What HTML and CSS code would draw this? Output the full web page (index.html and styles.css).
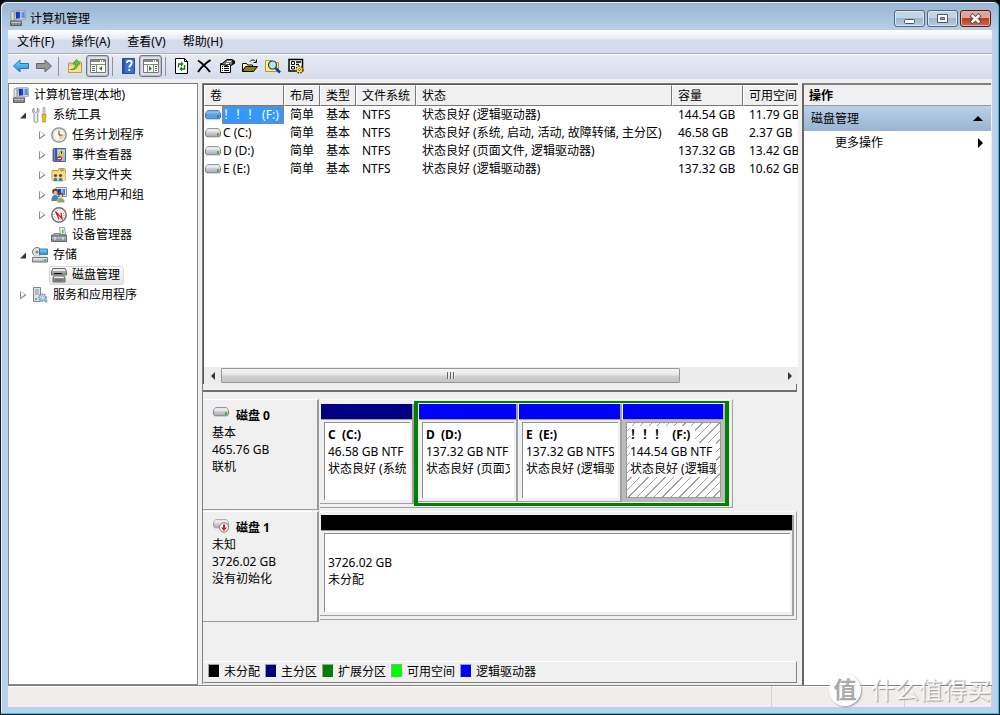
FILE: index.html
```html
<!DOCTYPE html>
<html lang="zh-CN">
<head>
<meta charset="utf-8">
<title>计算机管理</title>
<link rel="stylesheet" href="styles.css">
</head>
<body>
<svg class="sprite" aria-hidden="true">
  <linearGradient id="metal" x1="0" y1="0" x2="0" y2="1"><stop offset="0" stop-color="#f4f4f6"/><stop offset="1" stop-color="#a6a8ae"/></linearGradient>
  <linearGradient id="screen" x1="0" y1="0" x2="1" y2="0"><stop offset="0" stop-color="#0a2fc4"/><stop offset=".45" stop-color="#1747d6"/><stop offset=".5" stop-color="#b5ceff"/><stop offset="1" stop-color="#2f62e8"/></linearGradient>
  <linearGradient id="sky" x1="0" y1="0" x2="0" y2="1"><stop offset="0" stop-color="#7fd4ff"/><stop offset="1" stop-color="#1c8fdc"/></linearGradient>
  <symbol id="computer" viewBox="0 0 16 16"><path d="M1 2l3-1v10l-3-1z" fill="#e4e4da" stroke="#8c8c84" stroke-width=".8"/><path d="M4 .8h11l.6 8.400L5 9.800z" fill="#ecece6" stroke="#8a8a8a" stroke-width=".8"/><path d="M5.500 1.800h8.800l.4 6.300-8.700.6z" fill="url(#screen)"/><path d="M7 9.500h5l1 2H6z" fill="#c8c8c0"/><path d="M.5 11h11v4.500H.5z" fill="#6f7474" stroke="#4c5050" stroke-width=".8"/><path d="M1 12.300h10" stroke="#d2d6d6"/><path d="M2 14h2M5 14h2M8 14h2" stroke="#b8bcbc"/></symbol>
  <symbol id="tools" viewBox="0 0 16 16"><path d="M2 1v3.500l1.700 1 1.700-1V1C7.500 2 7.500 5 5.700 6.500v8c0 1.300-3.700 1.300-3.700 0v-8C0 5 0 2 2 1z" fill="#ececec" stroke="#777" stroke-width=".8"/><path d="M11 .5h2V7h-2z" fill="#ddd" stroke="#888" stroke-width=".6"/><path d="M10 7.500h4v2.500l-.7 1v4h-2.600v-4l-.7-1z" fill="#f5bd1f" stroke="#b77d0a" stroke-width=".7"/></symbol>
  <symbol id="clock" viewBox="0 0 16 16"><circle cx="8" cy="8" r="7.200" fill="#f5f0dc" stroke="#85888d" stroke-width="1.300"/><circle cx="8" cy="8" r="5.500" fill="#fdfbf2" stroke="#d9d4c4" stroke-width=".8"/><path d="M8 8h5A5 5 0 0 1 8 13z" fill="#f3d38b"/><path d="M8 3.500V8h3.500" fill="none" stroke="#444"/></symbol>
  <symbol id="events" viewBox="0 0 16 16"><path d="M2.500 1.500h12v13h-12z" fill="#9bbbe4" stroke="#3f68a9"/><path d="M4 2h2v12H4z" fill="#345da3"/><path d="M1 3h3M1 5h3M1 7h3M1 9h3M1 11h3M1 13h3" stroke="#555" stroke-width=".8"/><path d="M7 4h7M7 6h7M7 8h7" stroke="#e8f1fc"/><path d="M10.500 2.500l3 5.500h-6z" fill="#ffd629" stroke="#b88b00" stroke-width=".5"/><path d="M10.500 4.300v2.500" stroke="#222"/><circle cx="8.500" cy="11.500" r="2.500" fill="#dd2a24"/><path d="M7 11.500h3" stroke="#fff"/></symbol>
  <symbol id="share" viewBox="0 0 16 16"><path d="M1 3.500h6l1-2h5.500l1 1.500v10H1z" fill="#f7d46f" stroke="#c99b30"/><path d="M9 2.500h4v1.500H9z" fill="#4da3da"/><path d="M1.500 5.500h13v7.500h-13z" fill="#f9df8c"/><circle cx="4.500" cy="8.500" r="1.600" fill="#6b4424"/><circle cx="9.500" cy="8.500" r="1.600" fill="#6b4424"/><path d="M2 14.500c0-5.500 5-5.500 5 0zM7 14.500c0-5.500 5-5.500 5 0z" fill="#3e7f9c" stroke="#fff" stroke-width=".5"/></symbol>
  <symbol id="users" viewBox="0 0 16 16"><path d="M5 .5h10.500v9H5z" fill="#e4e6ed" stroke="#8890a0"/><path d="M6.500 2h7.500v6H6.500z" fill="url(#screen)"/><circle cx="4" cy="4.500" r="2.800" fill="#6b3d1c"/><circle cx="4.400" cy="5.500" r="1.700" fill="#f0bf91"/><path d="M.3 14c0-8 7.700-8 7.700 0z" fill="#4b83bb"/><circle cx="9.800" cy="8" r="2.500" fill="#7f4b1c"/><circle cx="9.800" cy="9" r="1.600" fill="#f2c59c"/><path d="M5.800 15.700c0-6.500 8-6.500 8 0z" fill="#7cae69" stroke="#eee" stroke-width=".5"/></symbol>
  <symbol id="gauge" viewBox="0 0 16 16"><circle cx="8" cy="8" r="7.200" fill="#fff" stroke="#6f6f6f" stroke-width="1.500"/><circle cx="8" cy="8" r="5" fill="none" stroke="#666" stroke-width=".8" stroke-dasharray="1 1.600"/><path d="M4.500 4.500l6.500 7-1-6M4.500 4.500L8 12" fill="none" stroke="#d21c1c" stroke-width="1.300"/></symbol>
  <symbol id="device" viewBox="0 0 16 16"><path d="M8.500.5h5l1 7h-5z" fill="#f0f3f3" stroke="#98a0a2"/><path d="M11 2.500h1.500v4H11z" fill="#4cb752"/><path d="M3 8V6.500h6V8" fill="none" stroke="#7c8487"/><path d="M.5 8h15v6.500H.5z" fill="#8d9598" stroke="#5f686b"/><path d="M1 11h14" stroke="#c9d0d2"/><path d="M4 10v3M12 10v3" stroke="#eef2f3"/></symbol>
  <symbol id="storage" viewBox="0 0 16 16"><circle cx="5" cy="5" r="4.500" fill="#dfe1e4" stroke="#777"/><circle cx="5" cy="5" r="1.500" fill="#888"/><path d="M7.500 2h8v5.500h-8z" fill="url(#sky)" stroke="#447d9c"/><path d="M2 8.500h12l1.500 2H.5z" fill="#e3e4e6"/><path d="M.5 10.500h15V15H.5z" fill="url(#metal)" stroke="#777"/><path d="M12 12h2v2h-2z" fill="#42d22a"/></symbol>
  <symbol id="disks" viewBox="0 0 16 16"><path d="M2 1.500h12l1.500 3V8H.5V4.500z" fill="#a2a4a7" stroke="#606264"/><path d="M2.300 2h11.400l1 2H1.300z" fill="#e8eaec"/><path d="M3 6.500h8" stroke="#111"/><path d="M12.500 5.500h1.700v1.700h-1.700z" fill="#3fca3f"/><path d="M3 9h10l1 2v4H2v-4z" fill="#909396" stroke="#666"/><path d="M3.500 9.500h9l.7 1.500H2.800z" fill="#e8e9eb"/><path d="M4 13h8" stroke="#555"/></symbol>
  <symbol id="services" viewBox="0 0 16 16"><path d="M1.500.5h7v14h-7z" fill="#dfe3e5" stroke="#7b858c"/><path d="M3 3h4M3 5h4M3 7h4" stroke="#829099"/><path d="M3 11h2v2H3z" fill="#5bc24f"/><circle cx="10.500" cy="10.500" r="3.500" fill="#b8d2e8" stroke="#6d93b5" stroke-width="1.600" stroke-dasharray="1.500 1"/><circle cx="10.500" cy="10.500" r="1.300" fill="#fff" stroke="#6d93b5" stroke-width=".5"/><circle cx="14" cy="14" r="1.700" fill="#8fb1cd"/></symbol>
  <symbol id="drive" viewBox="0 0 16 10"><path d="M2.500.7h11l2 2.800v3.800l-1.200 1.500H1.700L.5 7.300V3.500z" fill="url(#metal)" stroke="#808087"/><path d="M2.500 1.200h11l1.500 2.300H1z" fill="#ececf0"/><path d="M12 5h1.800v3H12z" fill="#3fb52c"/></symbol>
  <symbol id="drive-blue" viewBox="0 0 16 10"><path d="M2.500.7h11l2 2.800v3.800l-1.200 1.500H1.700L.5 7.300V3.500z" fill="#5b9fe6" stroke="#3a72b8"/><path d="M2.500 1.200h11l1.500 2.300H1z" fill="#8bbdf0"/><path d="M12 5h1.800v3H12z" fill="#207f92"/></symbol>
  <symbol id="drive-down" viewBox="0 0 16 14"><path d="M2.500.7h11l2 2.800v3.800l-1.200 1.500H1.700L.5 7.300V3.500z" fill="url(#metal)" stroke="#a0a0a6"/><path d="M2.500 1.200h11l1.500 2.300H1z" fill="#ececf0"/><circle cx="11" cy="8.500" r="4.600" fill="#fff" stroke="#777"/><path d="M10 5.500h2v3h2l-3 3.500-3-3.500h2z" fill="#d51717"/></symbol>
</svg>

<div class="window">
  <header class="titlebar">
    <svg class="icon"><use href="#computer"/></svg>
    <h1 class="title">计算机管理</h1>
    <div class="window-buttons">
      <button class="winbtn" aria-label="最小化"><svg viewBox="0 0 29 15"><rect x="9.500" y="8.500" width="10" height="4" rx="1" fill="#fff" stroke="#4c5566"/></svg></button>
      <button class="winbtn" aria-label="最大化"><svg viewBox="0 0 29 15"><path d="M9.500 3.500h10v8h-10z" fill="#fff" stroke="#4c5566"/><path d="M12.500 6.500h4v2h-4z" fill="#9db5d0" stroke="#4c5566"/></svg></button>
      <button class="winbtn close" aria-label="关闭"><svg viewBox="0 0 29 15"><path d="M11.500 5l6 5.500M17.500 5l-6 5.500" stroke="#50525e" stroke-width="4.400" stroke-linecap="square"/><path d="M11.500 5l6 5.500M17.500 5l-6 5.500" stroke="#fff" stroke-width="2.400" stroke-linecap="square"/></svg></button>
    </div>
  </header>

  <div class="client">
    <nav class="menubar">
      <button>文件(F)</button><button>操作(A)</button><button>查看(V)</button><button>帮助(H)</button>
    </nav>
    <div class="toolbar" role="toolbar">
      <button aria-label="后退"><svg class="icon" viewBox="0 0 16 16"><path d="M.5 8l6.500-6v3.500h8.500v5H7V14z" fill="url(#sky)" stroke="#2477ad"/></svg></button>
      <button aria-label="前进"><svg class="icon" viewBox="0 0 16 16"><path d="M15.500 8L9 2v3.500H.5v5H9V14z" fill="#969696" stroke="#666"/></svg></button>
      <span class="sep"></span>
      <button aria-label="上一级"><svg class="icon" viewBox="0 0 16 16"><path d="M1.500 5h5l1-1.500h6l1 1.500v9.500h-13z" fill="#efcb76" stroke="#c39a4a"/><path d="M2 8h12v6H2z" fill="#f8dd94"/><path d="M3.500 11.500c4 0 5-3 5-5.500H6L9.500 1.500 13 6h-2c0 4-3 6-7.500 5.500z" fill="#57cf35" stroke="#2a8e1c" stroke-width=".7"/></svg></button>
      <button class="pressed" aria-label="显示控制台树"><svg class="icon" viewBox="0 0 16 16"><path d="M.5 1.500h15v13H.5z" fill="#fff" stroke="#777"/><path d="M1 3h14" stroke="#888" stroke-width="2" stroke-dasharray="9 1 1 1"/><path d="M1 6.500h14M6.500 7v7" stroke="#888"/><path d="M2 8.500h3M2 10.500h3M2 12.500h3" stroke="#666"/><path d="M12 8v5l-3-2.500z" fill="#149414"/></svg></button>
      <span class="sep"></span>
      <button aria-label="帮助"><svg class="icon" viewBox="0 0 16 16"><path d="M2.500.5h12v15h-12z" fill="#3f6ecb" stroke="#274a94"/><path d="M3 1h2v14H3z" fill="#2c53a6"/><path d="M6.800 5c0-3 5-3 5 0 0 2-2.500 2-2.500 4.500M9.300 11v2" fill="none" stroke="#fff" stroke-width="1.800"/></svg></button>
      <button class="pressed" aria-label="显示操作窗格"><svg class="icon" viewBox="0 0 16 16"><path d="M.5 1.500h15v13H.5z" fill="#fff" stroke="#777"/><path d="M1 3h14" stroke="#888" stroke-width="2" stroke-dasharray="9 1 1 1"/><path d="M1 6.500h14M10.500 7v7M4.500 7v7" stroke="#888"/><path d="M12 8.500h2M12 10.500h2M12 12.500h2" stroke="#666"/><path d="M6 8v5l3-2.500z" fill="#149414"/></svg></button>
      <span class="sep"></span>
      <button aria-label="刷新"><svg class="icon" viewBox="0 0 16 16"><path d="M2.500.5h9l3 3v12h-12z" fill="#fff" stroke="#000"/><path d="M11.500.5v3h3" fill="none" stroke="#000"/><path d="M5.500 9.500V6H9M11.500 7v4H8" fill="none" stroke="#087d08" stroke-width="1.300"/><path d="M8 3.500v5L10.500 6zM9 8.500v5L6.500 11z" fill="#087d08"/></svg></button>
      <button aria-label="删除"><svg class="icon" viewBox="0 0 16 16"><path d="M2 2.500c4 2.500 8 6.500 12 11.500M14.500 2C9 5.500 5 9.500 2 14" fill="none" stroke="#000" stroke-width="2"/></svg></button>
      <button aria-label="属性"><svg class="icon" viewBox="0 0 16 16"><path d="M1.500 5.500h10v9h-10z" fill="#fff" stroke="#000"/><path d="M3 8.500h1M5 8.500h5M3 10.500h1M5 10.500h5M3 12.500h1M5 12.500h5" stroke="#000"/><path d="M2 6.500l6-5h5l2.500 1.500v2.500L12 7.500 10 6 8 7.500z" fill="#777" stroke="#000"/><path d="M8 3.500h4M7 5.500h3" stroke="#fff"/><path d="M14 2v4" stroke="#000" stroke-width="1.500"/></svg></button>
      <button aria-label="打开"><svg class="icon" viewBox="0 0 16 16"><path d="M.5 13.500v-8h4l1 1.500h5v2" fill="#ffff9c" stroke="#000"/><path d="M.5 13.500l3-5h12l-4 5z" fill="#8a8600" stroke="#000"/><path d="M8 3.500c1.500-2 4-2 5.500 0M14.500 1.500v3h-3" fill="none" stroke="#000"/></svg></button>
      <button aria-label="查找"><svg class="icon" viewBox="0 0 16 16"><path d="M.5 2.500h6l1 2h6v9H.5z" fill="#fff38c" stroke="#b99a20"/><circle cx="7.500" cy="7" r="4" fill="#aeeaf5" stroke="#333" stroke-width="1.200"/><path d="M10.500 10l4.500 4.500" stroke="#1230b8" stroke-width="2.500"/></svg></button>
      <button aria-label="设置"><svg class="icon" viewBox="0 0 16 16"><path d="M1 1.500h13.500v11.500H1z" fill="#fff" stroke="#000" stroke-width="1.500"/><path d="M3.500 3.500h3v3h-3zM3.500 8.500h3V11h-3z" fill="none" stroke="#000"/><path d="M8 4h5M8 6.500h3" stroke="#000" stroke-width="1.300"/><circle cx="11.500" cy="11.500" r="3.200" fill="#f4dc42" stroke="#5f4c00" stroke-width="2" stroke-dasharray="1.500 1.200"/><circle cx="11.500" cy="11.500" r="2.600" fill="#f4dc42"/><circle cx="11.500" cy="11.500" r="1" fill="#fff" stroke="#5f4c00" stroke-width=".6"/></svg></button>
    </div>

    <main class="panes">
      <section class="tree" aria-label="控制台树">
        <ul>
          <li class="node root"><svg class="icon"><use href="#computer"/></svg><span class="label">计算机管理(本地)</span></li>
          <li class="node level1"><span class="twisty open"></span><svg class="icon"><use href="#tools"/></svg><span class="label">系统工具</span></li>
          <li class="node level2"><span class="twisty"></span><svg class="icon"><use href="#clock"/></svg><span class="label">任务计划程序</span></li>
          <li class="node level2"><span class="twisty"></span><svg class="icon"><use href="#events"/></svg><span class="label">事件查看器</span></li>
          <li class="node level2"><span class="twisty"></span><svg class="icon"><use href="#share"/></svg><span class="label">共享文件夹</span></li>
          <li class="node level2"><span class="twisty"></span><svg class="icon"><use href="#users"/></svg><span class="label">本地用户和组</span></li>
          <li class="node level2"><span class="twisty"></span><svg class="icon"><use href="#gauge"/></svg><span class="label">性能</span></li>
          <li class="node level2"><span class="twisty none"></span><svg class="icon"><use href="#device"/></svg><span class="label">设备管理器</span></li>
          <li class="node level1"><span class="twisty open"></span><svg class="icon"><use href="#storage"/></svg><span class="label">存储</span></li>
          <li class="node level2"><span class="twisty none"></span><span class="selected"><svg class="icon"><use href="#disks"/></svg><span class="label">磁盘管理</span></span></li>
          <li class="node level1"><span class="twisty"></span><svg class="icon"><use href="#services"/></svg><span class="label">服务和应用程序</span></li>
        </ul>
      </section>

      <section class="center">
        <div class="volumes">
          <table>
            <colgroup><col class="c-name"><col class="c-small"><col class="c-small"><col class="c-fs"><col class="c-status"><col class="c-size"><col></colgroup>
            <thead><tr><th>卷</th><th>布局</th><th>类型</th><th>文件系统</th><th>状态</th><th>容量</th><th>可用空间</th></tr></thead>
            <tbody>
              <tr><td class="name"><div><svg class="drive"><use href="#drive-blue"/></svg><span class="picked">！！！ (F:)</span></div></td><td>简单</td><td>基本</td><td>NTFS</td><td>状态良好 (逻辑驱动器)</td><td>144.54 GB</td><td>11.79 GB</td></tr>
              <tr><td class="name"><div><svg class="drive"><use href="#drive"/></svg><span>C (C:)</span></div></td><td>简单</td><td>基本</td><td>NTFS</td><td>状态良好 (系统, 启动, 活动, 故障转储, 主分区)</td><td>46.58 GB</td><td>2.37 GB</td></tr>
              <tr><td class="name"><div><svg class="drive"><use href="#drive"/></svg><span>D (D:)</span></div></td><td>简单</td><td>基本</td><td>NTFS</td><td>状态良好 (页面文件, 逻辑驱动器)</td><td>137.32 GB</td><td>13.42 GB</td></tr>
              <tr><td class="name"><div><svg class="drive"><use href="#drive"/></svg><span>E (E:)</span></div></td><td>简单</td><td>基本</td><td>NTFS</td><td>状态良好 (逻辑驱动器)</td><td>137.32 GB</td><td>10.62 GB</td></tr>
            </tbody>
          </table>
          <div class="scrollbar">
            <button class="arrow" aria-label="向左滚动"><svg viewBox="0 0 4 8"><path d="M4 0v8L0 4z" fill="#333"/></svg></button>
            <div class="track"><div class="thumb"><i></i><i></i><i></i></div></div>
            <button class="arrow" aria-label="向右滚动"><svg viewBox="0 0 4 8"><path d="M0 0v8l4-4z" fill="#333"/></svg></button>
          </div>
        </div>

        <div class="graph">
          <article class="disk">
            <div class="disk-info">
              <h2><svg class="drive"><use href="#drive"/></svg>磁盘 0</h2>
              <p>基本</p><p>465.76 GB</p><p>联机</p>
            </div>
            <div class="disk-map">
              <div class="volume vol-c"><div class="bar primary"></div><div class="cell"><div class="cell-in"><b>C  (C:)</b><span>46.58 GB NTF</span><span>状态良好 (系统</span></div></div></div>
              <div class="extended">
                <div class="volume vol-d"><div class="bar logical"></div><div class="cell"><div class="cell-in"><b>D  (D:)</b><span>137.32 GB NTF</span><span>状态良好 (页面文</span></div></div></div>
                <div class="volume vol-e"><div class="bar logical"></div><div class="cell"><div class="cell-in"><b>E  (E:)</b><span>137.32 GB NTFS</span><span>状态良好 (逻辑驱</span></div></div></div>
                <div class="volume vol-f current"><div class="bar logical"></div><div class="cell"><div class="cell-in"><b>！！！  (F:)</b><span>144.54 GB NTF</span><span>状态良好 (逻辑驱</span></div></div></div>
              </div>
            </div>
          </article>
          <article class="disk">
            <div class="disk-info">
              <h2><svg class="drive down"><use href="#drive-down"/></svg>磁盘 1</h2>
              <p>未知</p><p>3726.02 GB</p><p>没有初始化</p>
            </div>
            <div class="disk-map whole">
              <div class="volume"><div class="bar unallocated"></div><div class="cell"><div class="cell-in"><b> </b><span>3726.02 GB</span><span>未分配</span></div></div></div>
            </div>
          </article>
          <ul class="legend">
            <li><i class="unallocated"></i>未分配</li><li><i class="primary"></i>主分区</li><li><i class="ext"></i>扩展分区</li><li><i class="free"></i>可用空间</li><li><i class="logical"></i>逻辑驱动器</li>
          </ul>
        </div>
      </section>

      <aside class="actions">
        <h2 class="actions-title">操作</h2>
        <button class="group">磁盘管理<svg viewBox="0 0 10 5"><path d="M5 0l5 5H0z"/></svg></button>
        <button class="more">更多操作<svg class="side" viewBox="0 0 5 10"><path d="M0 0l5 5-5 5z"/></svg></button>
      </aside>
    </main>

    <footer class="statusbar"><span class="wide"></span><span class="mid"></span><span class="end"></span></footer>
  </div>
  <div class="watermark"><span class="seal">值</span><span>什么值得买</span></div>
</div>
</body>
</html>
```

FILE: styles.css
```css
* { box-sizing: border-box; }
body {
  margin: 0;
  background: #000;
  color: #000;
  font-size: 12px;
  line-height: 16px;
}
body, button { font-family: "Noto Sans", "Noto Sans CJK SC", sans-serif; }
button { margin: 0; padding: 0; border: 0; background: none; font-size: 12px; line-height: 16px; color: #000; }
h1, h2, p, ul { margin: 0; padding: 0; font-size: 12px; font-weight: normal; list-style: none; }
.sprite { position: absolute; width: 0; height: 0; }
.icon { display: block; flex: none; width: 16px; height: 16px; }
.drive { display: block; flex: none; width: 16px; height: 10px; }

.window {
  position: relative;
  display: flex;
  flex-direction: column;
  height: 100vh;
  padding: 0 6px 7px;
  border: 1px solid #1b1f27;
  border-width: 2px 1px 1px;
  border-radius: 7px 7px 0 0;
  box-shadow: inset -1px -1px 0 #22c8e8, inset 1px 1px 0 #e4eef8;
  background: linear-gradient(#99b4d1, #b9d1ea 30px, #b9d1ea);
}
.titlebar { display: flex; flex: none; height: 28px; padding: 0 2px 0 3px; }
.titlebar .icon { margin-top: 8px; }
.title { flex: 1; margin: 9px 0 0 4px; }
.window-buttons { display: flex; gap: 2px; padding-top: 8px; }
.winbtn {
  width: 31px;
  height: 17px;
  border: 1px solid #55667c;
  border-radius: 3px;
  background: linear-gradient(#c3d4e6 45%, #9fb7d0 50%, #b5cce3);
  box-shadow: inset 0 0 0 1px #d9e6f3;
}
.winbtn svg { display: block; width: 29px; height: 15px; }
.close { border-color: #4e1b1b; background: linear-gradient(#e0a397 45%, #c13a20 50%, #d1694c); box-shadow: inset 0 0 0 1px #e9b2a6; }

.client { display: flex; flex: 1; flex-direction: column; min-height: 0; margin: 0 1px; background: #f0f0f0; }
.menubar {
  display: flex;
  flex: none;
  gap: 1px;
  height: 24px;
  padding-left: 1px;
  border-bottom: 1px solid #a7adb9;
  background: linear-gradient(#fff, #e5eaf5 9px, #d4dbed 10px, #d4dbed);
}
.menubar button { padding: 1px 8px 0; }
.toolbar {
  display: flex;
  flex: none;
  align-items: center;
  height: 25px;
  padding: 0 0 2px 1px;
  border-top: 1px solid #fff;
  background: linear-gradient(#e6eaf6, #d5dcec);
}
.toolbar button { display: grid; place-items: center; width: 23px; height: 22px; }
.toolbar .pressed { border: 1px solid #6f7480; border-radius: 3px; background: #dde1ea; box-shadow: inset 0 0 1px 1px #b7bcc8; }
.sep { width: 1px; height: 19px; margin: 0 4px 0 3px; background: #8d929c; }
.pressed + .sep { margin-right: 3px; }

.panes { display: flex; flex: 1; gap: 4px; min-height: 0; padding: 4px 1px 0 0; }
.tree { flex: none; width: 190px; padding: 1px 0 0 4px; border: 1px solid #828790; border-top-color: #777; background: #fff; }
.node { display: flex; align-items: center; height: 20px; }
.label { margin-left: 5px; white-space: nowrap; }
.level1 { padding-left: 7px; }
.level2 { padding-left: 26px; }
.twisty { flex: none; width: 12px; height: 9px; }
.twisty:not(.none)::before { content: ""; display: block; width: 6px; height: 9px; background: #8c8c8c; clip-path: polygon(0 0, 6px 4px, 6px 5px, 0 9px, 0 1px, 1px 2px, 1px 7px, 5px 4px, 1px 1px, 0 1px); }
.twisty.open::before { width: 6px; height: 6px; margin-top: 2px; background: #333; clip-path: polygon(100% 0, 100% 100%, 0 100%); }
.selected { display: flex; align-items: center; height: 19px; margin-left: -2px; padding: 0 3px 0 1px; border: 1px solid #d9d9d9; border-radius: 3px; background: linear-gradient(#fafafa, #e6e6e6); }

.center { display: flex; flex: 1; flex-direction: column; min-width: 0; margin-bottom: 1px; border: 1px solid #808080; border-width: 1px 0 0 1px; }
.volumes {
  display: flex;
  flex: none;
  flex-direction: column;
  min-height: 300px;
  overflow: hidden;
  border-top: 1px solid #555;
  border-left: 1px solid #555;
  background: #fff;
}
.volumes table { width: 100%; table-layout: fixed; border-collapse: separate; border-spacing: 0; }
.c-name { width: 80px; }
.c-small { width: 36px; }
.c-fs { width: 60px; }
.c-status { width: 256px; }
.c-size { width: 71px; }
.volumes th, .volumes td { overflow: hidden; padding: 0 0 0 6px; text-align: left; font-weight: normal; white-space: nowrap; }
.volumes th { height: 21px; border: 1px solid; border-color: #fff #777 #777 #fff; padding-left: 5px; background: #f0f0f0; }
.volumes th:last-child { border-right: 0; }
.volumes td { height: 18px; line-height: 18px; }
.volumes td.name { padding-left: 1px; }
.name div { display: flex; align-items: center; height: 18px; }
.name span { margin-left: 2px; }
.name .picked { flex: 1; margin-left: 1px; border: 1px dotted #d0742b; line-height: 16px; background: #39f; color: #fff; }
.picked, .cell-in b { font-family: "Noto Sans", "Noto Sans CJK TC", sans-serif; }
.scrollbar { display: flex; flex: none; height: 17px; margin-top: auto; background: #ececec; }
.arrow { display: grid; place-items: center; flex: none; width: 17px; }
.arrow svg { width: 4px; height: 8px; }
.track { flex: 1; padding: 1px 0; }
.thumb { display: flex; justify-content: center; align-items: center; gap: 1px; width: 82%; height: 15px; border: 1px solid #979797; border-radius: 1px; background: linear-gradient(#f5f5f5, #e6e6e6 48%, #d0d0d0 52%, #c4c4c4); }
.thumb i { width: 2px; height: 7px; background: linear-gradient(90deg, #666 50%, #eee 50%); }

.graph { display: flex; flex: 1; flex-direction: column; margin-right: 1px; padding-bottom: 1px; }
.graph::before { content: ""; flex: none; height: 6px; margin-bottom: 7px; border: 1px solid #707070; border-width: 0 1px 2px 0; background: #f0f0f0; }
.disk { display: flex; flex: none; height: 112px; }
.disk-info { flex: none; width: 116px; height: 111px; padding: 7px 0 0 9px; border: 1px solid #9a9a9a; border-width: 1px 2px 1px 0; border-top-color: #fff; line-height: 17px; }
.disk-info h2 { display: flex; gap: 7px; align-items: flex-start; font-weight: bold; line-height: 17px; }
.disk-info .drive { margin: 0 0 0 1px; }
.disk-info .down { height: 14px; }
.disk-map { display: flex; height: 109px; margin: 0 0 0 1px; padding: 1px 3px 1px 0; border: 1px solid #a0a0a0; border-width: 1px 1px 1px 0; border-top-color: #fafafa; }
.disk-map.whole { flex: 1; padding: 3px 2px 3px 0; }
.volume { display: flex; flex: 1; flex-direction: column; min-width: 0; border-right: 2px solid #a0a0a0; border-bottom: 1px solid #a0a0a0; }
.vol-c { flex: none; width: 94px; margin: 3px 0 2px; }
.vol-d { flex: none; width: 100px; }
.vol-e { flex: none; width: 104px; }
.vol-f { flex: none; width: 103px; }
.bar { flex: none; height: 16px; border-bottom: 1px solid #a0a0a0; margin-left: 1px; }
.primary { background-color: #000080; }
.logical { background-color: #00f; }
.unallocated { background-color: #000; }
.ext { background-color: #008000; }
.free { background-color: #0f0; }
.extended { display: flex; border: solid #008000; border-width: 2px 4px 3px; padding: 1px 0 1px 0; background: #f0f0f0; }
.cell { flex: 1; min-height: 0; padding: 2px 2px 3px 4px; }
.cell-in { display: flex; flex-direction: column; height: 100%; overflow: hidden; padding: 3px 4px 0 3px; border: 1px solid #909090; border-width: 1px 0 0 1px; background: #fff; line-height: 17px; white-space: pre; }
.cell-in b { min-height: 17px; }
.cell-in b, .cell-in span { overflow: hidden; }
.current { border-color: #bbb; }
.current .cell { background: #bbb; }
.current .cell-in { border: 1px solid #999; background: repeating-linear-gradient(135deg, #fff 0 5px, #a0a0a0 5px 6px); }
.current b { align-self: flex-start; background: #fff; padding-right: 5px; }
.current span { background: #fff; }
.legend { display: flex; align-items: center; gap: 5px; height: 22px; margin-top: auto; padding-left: 4px; border: 1px solid; border-color: #fff #808080 #808080 #f0f0f0; }
.legend li { display: flex; gap: 4px; }
.legend i { width: 12px; height: 14px; border: 1px solid; border-color: #a0a0a0 #fff #fff #a0a0a0; }

.actions { flex: none; width: 189px; border: 2px solid #666; border-width: 2px 0 0 2px; border-top-color: #808080; background: #fff; }
.actions-title { height: 21px; padding: 3px 4px 0 5px; border-bottom: 1px solid #9a9a9a; background: #f0f0f0; font-weight: bold; }
.group, .more { display: flex; align-items: center; justify-content: space-between; width: 100%; height: 25px; padding: 0 8px 0 7px; text-align: left; }
.group { background: linear-gradient(#b9d1ea, #99b4d1); }
.more { height: 24px; padding-left: 31px; }
.group svg { width: 10px; height: 5px; }
.side { width: 5px; height: 10px; }

.statusbar { display: flex; flex: none; height: 22px; border-top: 1px solid #808080; background: #f1eded; box-shadow: inset 0 1px #fff; }
.statusbar span { border-right: 1px solid #d4d0d0; }
.wide { flex: 1; }
.mid { width: 133px; }
.end { width: 87px; }
.watermark {
  position: absolute;
  right: 8px;
  bottom: 8px;
  display: flex;
  align-items: center;
  gap: 10px;
  color: rgba(255, 255, 255, .85);
  font-size: 24px;
  line-height: 32px;
  text-shadow: 1px 1px 1px #999;
}
.seal { width: 32px; height: 32px; border-radius: 50%; background: rgba(255, 255, 255, .85); color: #aaa; font-size: 23px; font-weight: bold; line-height: 30px; text-align: center; text-shadow: none; box-shadow: 1px 1px 2px #999; }
```
